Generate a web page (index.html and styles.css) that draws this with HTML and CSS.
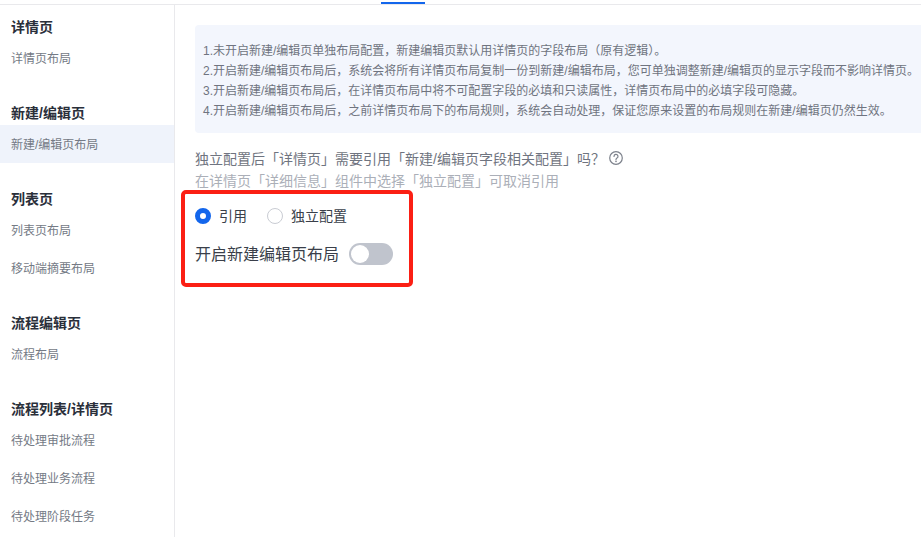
FILE: index.html
```html
<!DOCTYPE html>
<html lang="zh-CN">
<head>
    <meta charset="UTF-8">
    <title>布局设置</title>
    <link rel="stylesheet" href="styles.css">
</head>
<body>
    <div class="top-bar"><span class="tab-line"></span></div>
    <div class="layout">
        <div class="sidebar">
            <div class="group">
                <div class="group-title">详情页</div>
                <div class="nav-item">详情页布局</div>
            </div>
            <div class="group">
                <div class="group-title">新建/编辑页</div>
                <div class="nav-item active">新建/编辑页布局</div>
            </div>
            <div class="group">
                <div class="group-title">列表页</div>
                <div class="nav-item">列表页布局</div>
                <div class="nav-item">移动端摘要布局</div>
            </div>
            <div class="group">
                <div class="group-title">流程编辑页</div>
                <div class="nav-item">流程布局</div>
            </div>
            <div class="group">
                <div class="group-title">流程列表/详情页</div>
                <div class="nav-item">待处理审批流程</div>
                <div class="nav-item">待处理业务流程</div>
                <div class="nav-item">待处理阶段任务</div>
            </div>
        </div>
        <div class="main">
            <div class="notice">
                <p>1.未开启新建/编辑页单独布局配置，新建编辑页默认用详情页的字段布局（原有逻辑）。</p>
                <p>2.开启新建/编辑页布局后，系统会将所有详情页布局复制一份到新建/编辑布局，您可单独调整新建/编辑页的显示字段而不影响详情页。</p>
                <p>3.开启新建/编辑页布局后，在详情页布局中将不可配置字段的必填和只读属性，详情页布局中的必填字段可隐藏。</p>
                <p>4.开启新建/编辑页布局后，之前详情页布局下的布局规则，系统会自动处理，保证您原来设置的布局规则在新建/编辑页仍然生效。</p>
            </div>
            <div class="question">
                独立配置后「详情页」需要引用「新建/编辑页字段相关配置」吗？
                <svg class="help-icon" width="14" height="14" viewBox="0 0 14 14" fill="none">
                    <circle cx="7" cy="7" r="6.3" stroke="#7d828c" stroke-width="1.2"/>
                    <path d="M5 5.4a2 2 0 1 1 3 1.7c-.7.4-1 .8-1 1.5" stroke="#7d828c" stroke-width="1.2" stroke-linecap="round"/>
                    <circle cx="7" cy="10.4" r=".8" fill="#7d828c"/>
                </svg>
            </div>
            <div class="hint">在详情页「详细信息」组件中选择「独立配置」可取消引用</div>
            <div class="radio-row">
                <label class="radio"><span class="radio-dot checked"></span><span class="radio-text">引用</span></label>
                <label class="radio"><span class="radio-dot"></span><span class="radio-text">独立配置</span></label>
            </div>
            <div class="switch-row">
                <span class="switch-label">开启新建编辑页布局</span>
                <span class="switch"><span class="switch-knob"></span></span>
            </div>
            <div class="red-box"></div>
        </div>
    </div>
</body>
</html>
```

FILE: styles.css
```css
html, body {
    height: 100%;
}
body {
    margin: 0;
    background-color: #fff;
    color: #333;
    font-family: "Liberation Sans", "Noto Sans CJK SC", sans-serif;
    overflow: hidden;
}
.top-bar {
    position: relative;
    height: 4px;
    border-bottom: 1px solid #e9e9ec;
}
.tab-line {
    position: absolute;
    left: 381px;
    top: 2px;
    width: 44px;
    height: 2px;
    background-color: #1366ec;
}
.layout {
    display: flex;
    height: 532px;
}
.sidebar {
    width: 174px;
    padding-top: 10px;
    border-right: 1px solid #e9e9ec;
    flex-shrink: 0;
}
.group {
    margin-bottom: 24px;
}
.group-title {
    height: 24px;
    line-height: 24px;
    padding-left: 11px;
    font-size: 14px;
    font-weight: 700;
    color: #2a2f3a;
}
.nav-item {
    height: 38px;
    line-height: 40px;
    padding-left: 11px;
    font-size: 12px;
    color: #747a85;
}
.nav-item.active {
    background-color: #eff3fb;
}
.main {
    position: relative;
    flex: 1;
    min-width: 0;
    padding: 20px 0 0 20px;
}
.notice {
    height: 78px;
    padding: 16px 0 14px 8px;
    background-color: #f3f6fd;
    border-radius: 4px 0 0 4px;
    font-size: 12px;
    line-height: 20px;
    color: #6f7480;
    white-space: nowrap;
}
.notice p {
    margin: 0;
}
.question {
    display: flex;
    align-items: center;
    height: 22px;
    margin-top: 14px;
    font-size: 14px;
    color: #6f7480;
}
.help-icon {
    margin-left: 4px;
}
.hint {
    height: 22px;
    line-height: 22px;
    margin-top: 1px;
    font-size: 14px;
    color: #abafb8;
}
.radio-row {
    display: flex;
    gap: 20px;
    height: 22px;
    margin-top: 13px;
    align-items: center;
    font-size: 14px;
    color: #3a3f4a;
}
.radio {
    display: flex;
    align-items: center;
    gap: 8px;
}
.radio-text {
    margin-bottom: 2px;
}
.radio-dot {
    box-sizing: border-box;
    width: 16px;
    height: 16px;
    border: 1px solid #c9ccd3;
    border-radius: 50%;
    background-color: #fff;
}
.radio-dot.checked {
    border: 5px solid #1366ec;
}
.switch-row {
    display: flex;
    align-items: center;
    gap: 10px;
    height: 24px;
    margin-top: 15px;
}
.switch-label {
    margin-bottom: 2px;
    font-size: 16px;
    color: #3a3f4a;
}
.switch {
    position: relative;
    width: 44px;
    height: 22px;
    border-radius: 11px;
    background-color: #c0c4cd;
}
.switch-knob {
    position: absolute;
    left: 2px;
    top: 2px;
    width: 18px;
    height: 18px;
    border-radius: 50%;
    background-color: #fff;
}
.red-box {
    position: absolute;
    left: 6px;
    top: 185px;
    box-sizing: border-box;
    width: 232px;
    height: 97px;
    border: 4px solid #fb1f14;
    border-radius: 5px;
    pointer-events: none;
}
```
